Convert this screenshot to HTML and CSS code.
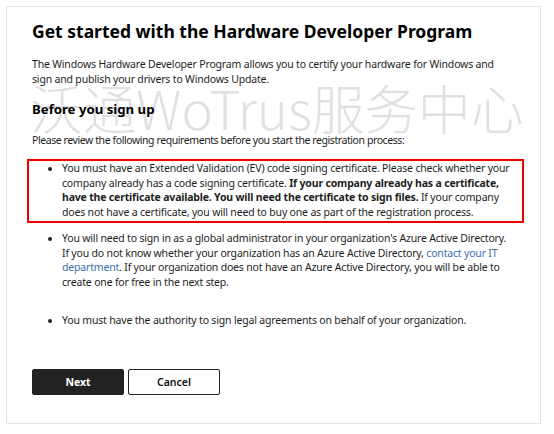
FILE: index.html
```html
<!DOCTYPE html>
<html lang="en">
<head>
<meta charset="utf-8">
<title>Get started with the Hardware Developer Program</title>
<link rel="stylesheet" href="styles.css">
</head>
<body>
<div class="card">
  <h1 class="title">Get started with the Hardware Developer Program</h1>
  <p class="intro">The Windows Hardware Developer Program allows you to certify your hardware for Windows and<br>sign and publish your drivers to Windows Update.</p>
  <h2 class="subtitle">Before you sign up</h2>
  <p class="lead">Please review the following requirements before you start the registration process:</p>
  <ul class="reqs highlight">
    <li>You must have an Extended Validation (EV) code signing certificate. Please check whether your<br>company already has a code signing certificate. <b>If your company already has a certificate,<br>have the certificate available. You will need the certificate to sign files.</b> If your company<br>does not have a certificate, you will need to buy one as part of the registration process.</li>
  </ul>
  <ul class="reqs">
    <li>You will need to sign in as a global administrator in your organization's Azure Active Directory.<br>If you do not know whether your organization has an Azure Active Directory, <a class="link" href="#">contact your IT<br>department</a>. If your organization does not have an Azure Active Directory, you will be able to<br>create one for free in the next step.</li>
    <li>You must have the authority to sign legal agreements on behalf of your organization.</li>
  </ul>
  <div class="actions">
    <button class="btn btn-primary" type="button">Next</button>
    <button class="btn btn-secondary" type="button">Cancel</button>
  </div>
  <div class="watermark">沃通WoTrus服务中心</div>
</div>
</body>
</html>
```
FILE: styles.css
```css
html, body {
  margin: 0;
  padding: 0;
  background: #ffffff;
}
body {
  font-family: "Noto Sans", "Open Sans", sans-serif;
  color: #1e1e1e;
  font-size: 10.5px;
}
.card {
  position: relative;
  margin: 6px 13px 0 6px;
  height: 418px;
  border: 1px solid #e6e6e6;
  padding: 12px 25px 0 25px;
  box-sizing: border-box;
  overflow: hidden;
}
.title {
  margin: 0;
  font-size: 17.5px;
  line-height: 24px;
  font-weight: 700;
  color: #000;
}
.intro {
  margin: 14px 0 0 0;
  line-height: 14.5px;
  white-space: nowrap;
  letter-spacing: -0.18px;
}
.subtitle {
  margin: 13px 0 0 0;
  font-size: 13.2px;
  line-height: 20px;
  font-weight: 700;
  color: #000;
}
.lead {
  margin: 14px 0 0 0;
  line-height: 14.5px;
  letter-spacing: -0.42px;
  white-space: nowrap;
}
.reqs {
  margin: 0;
  padding: 0 0 0 30px;
  line-height: 14.5px;
  list-style: disc;
  white-space: nowrap;
  letter-spacing: -0.18px;
}
.reqs li {
  margin-bottom: 23.5px;
}
.reqs li:last-child {
  margin-bottom: 0;
}
.reqs li::marker {
  font-size: 10px;
}
.highlight {
  margin: 11.5px -9px 0 -5px;
  border: 2px solid #ee0000;
  padding: 0 0 2px 33px;
}
.reqs:not(.highlight) {
  margin-top: 8px;
}
.link {
  color: #3d6fb0;
  text-decoration: none;
}
.actions {
  display: flex;
  gap: 4px;
  margin-top: 42px;
}
.btn {
  width: 92px;
  height: 26px;
  font-family: "Noto Sans", "Open Sans", sans-serif;
  font-size: 10.5px;
  font-weight: 700;
  border: 1px solid #222;
  border-radius: 2px;
  cursor: pointer;
}
.btn-primary {
  background: #222222;
  color: #ffffff;
}
.btn-secondary {
  background: #ffffff;
  color: #111111;
  font-weight: 600;
}
.watermark {
  position: absolute;
  left: 23px;
  top: 68px;
  font-family: "Noto Sans CJK SC", "Noto Sans", sans-serif;
  font-weight: 300;
  font-size: 53px;
  line-height: 64px;
  color: rgba(0, 0, 0, 0.12);
  white-space: nowrap;
  pointer-events: none;
}
```
